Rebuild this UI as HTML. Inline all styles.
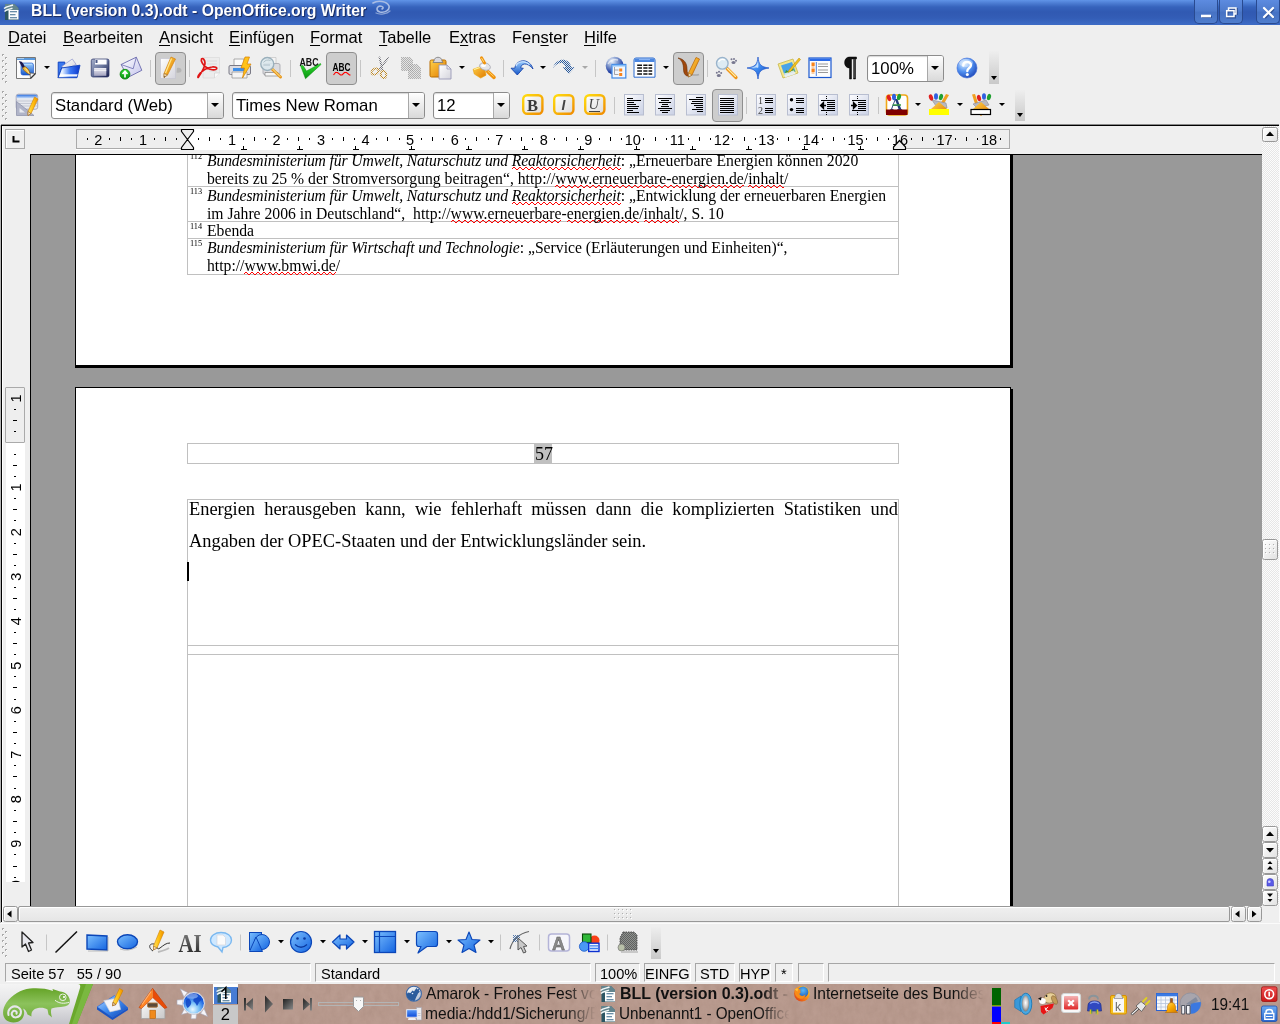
<!DOCTYPE html>
<html><head><meta charset="utf-8">
<style>
*{box-sizing:border-box;margin:0;padding:0}
html,body{width:1280px;height:1024px;overflow:hidden;background:#efefef;font-family:"Liberation Sans",sans-serif;color:#000}
.a{position:absolute}
svg{position:absolute;overflow:visible}
#title{left:0;top:0;width:1280px;height:25px;background:linear-gradient(#6094e8 0,#4d7ed4 3px,#3663bc 7px,#3059b2 12px,#335db6 18px,#3c6ac4 24px)}
#title .t{left:31px;top:1px;font-weight:bold;font-size:17px;color:#fff;text-shadow:1px 1px 1px #16275a;white-space:nowrap;transform:scaleX(.928);transform-origin:0 0}
.wb{top:0;height:24px;width:24px;border:1px solid #294a90;border-top:none;border-radius:0 0 5px 5px;background:linear-gradient(#5d8be0,#4f7ccd 45%,#4672c4 55%,#4f7dcd)}
#menu{left:0;top:25px;width:1280px;height:25px;background:#efefef}
#menu span{position:absolute;top:3px;font-size:16.5px;white-space:nowrap}
#menu u{text-decoration:underline;text-underline-offset:1.500px}
.combo{background:#fff;border:1px solid #8c8c8c;border-radius:3px;height:27px;font-size:17px;line-height:25px;padding-left:3px;white-space:nowrap;overflow:hidden;box-shadow:inset 0 1px 1px #d8d8d8}
.combo i{position:absolute;right:0;top:0;bottom:0;width:16px;border-left:1px solid #a8a8a8;background:linear-gradient(#fefefe,#d9d9d9)}
.combo i:after{content:"";position:absolute;left:3px;top:10px;border:4px solid transparent;border-top:4px solid #000;border-bottom:none}
.cx{display:inline-block;font-weight:normal;transform:scaleX(.985);transform-origin:0 50%}
.pressed{background:#cdcdcd;border:1px solid #8f8f8f;border-radius:4px}
.sep{width:1px;background:#c6c6c6}
.dd{width:0;height:0;border:3px solid transparent;border-top:3.300px solid #000;border-bottom:none}
.grip{width:5px;background:repeating-linear-gradient(#aaa 0 1px,transparent 1px 6px) 0px 0px/2px 100% no-repeat,repeating-linear-gradient(#aaa 0 1px,transparent 1px 6px) 0px 1px/1px 100% no-repeat,repeating-linear-gradient(#fff 0 1px,transparent 1px 6px) 1px 1px/1px 100% no-repeat,repeating-linear-gradient(#aaa 0 1px,transparent 1px 6px) 3px 3px/2px 100% no-repeat,repeating-linear-gradient(#aaa 0 1px,transparent 1px 6px) 3px 4px/1px 100% no-repeat,repeating-linear-gradient(#fff 0 1px,transparent 1px 6px) 4px 4px/1px 100% no-repeat}
.ovf{width:10px;background:linear-gradient(#eee,#c9c9c9)}
.ovf2:after{bottom:6px !important}
.ovf:after{content:"";position:absolute;left:2px;bottom:4px;border:3px solid transparent;border-top:4px solid #000;border-bottom:none}
#doc{left:30px;top:154px;width:1232px;height:752px;background:#999;overflow:hidden;border-left:1px solid #000;border-top:1px solid #000}
.ser{font-family:"Liberation Serif",serif}
.fr{border:1px solid #c0c0c0}
.ln{white-space:nowrap;font-family:"Liberation Serif",serif;transform-origin:0 0}
.fn{font-size:15.7px;line-height:18px}
.bd{font-size:18.4px;line-height:22px}
.sp{padding-bottom:1px;background:repeating-linear-gradient(90deg,transparent 0 1px,#f00 1px 3px,transparent 3px 6px) 0 calc(100% - 2px)/100% 1px no-repeat,repeating-linear-gradient(90deg,#f00 0 1px,transparent 1px 3px,#f00 3px 4px,transparent 4px 6px) 0 calc(100% - 1px)/100% 1px no-repeat,repeating-linear-gradient(90deg,transparent 0 4px,#f00 4px 6px) 0 100%/100% 1px no-repeat}
.sf{border:1px solid;border-color:#a6a6a6 #fff #fff #a6a6a6;height:19px;top:963px;font-size:14.600px;line-height:21px;white-space:nowrap;overflow:hidden}
.sbtn{border:1px solid #989898;border-radius:2.500px;background:linear-gradient(135deg,#fff,#e2e2e2);box-shadow:inset 1px 1px 0 #fff}
.tk{font-size:16.5px;white-space:nowrap;color:#111;overflow:hidden;-webkit-mask-image:linear-gradient(90deg,#000 82%,transparent 99%);mask-image:linear-gradient(90deg,#000 82%,transparent 99%)}
.nx{display:inline-block;transform:scaleX(.945);transform-origin:0 50%}
</style></head><body><div id="root" class="a" style="left:0;top:0;width:1280px;height:1024px;will-change:transform;overflow:hidden">
<!-- TITLE BAR -->
<div id="title" class="a">
 <svg style="left:3px;top:3px" width="17" height="18" viewBox="0 0 17 18">
  <path d="M2 1H11.500L15.500 5V17H2Z" fill="#2c5664"/>
  <path d="M2 1H11.500L15.500 5V8H2Z" fill="#7a9aa0" opacity=".7"/>
  <path d="M1 5.500C4 3 7 3.500 10 2M1.500 8.500C4 6 7 6.500 9.500 5" stroke="#f4f8f8" stroke-width="1.400" fill="none"/>
  <path d="M5.500 7H15.500V16.500H5.500Z" fill="#fdfefe"/>
  <path d="M7 8.800H14M7 11.800H12.500M7 14.800H14" stroke="#3a6a8c" stroke-width="1.100"/>
 </svg>
 <div class="a t">BLL (version 0.3).odt - OpenOffice.org Writer</div>
 <svg style="left:370px;top:0px" width="22" height="16" viewBox="0 0 22 16">
  <path d="M3 3 C8 0 17 1 19 6 C20 10 15 13 10 12 C6 11 6 7 10 6 C13 6 14 8 12 9" fill="none" stroke="#a9bde4" stroke-width="1.6" stroke-linecap="round"/>
  <path d="M6 13 C10 15 17 14 20 11" fill="none" stroke="#8aa3d6" stroke-width="1.2" stroke-linecap="round"/>
 </svg>
 <div class="a wb" style="left:1194px"></div>
 <div class="a wb" style="left:1219px"></div>
 <div class="a wb" style="left:1256px"></div>
 <svg style="left:1194px;top:0" width="86" height="24" viewBox="0 0 86 24">
  <g fill="none" stroke="#1c3470" stroke-width="2" opacity=".55" transform="translate(1,1)">
   <path d="M7 16H17"/><path d="M34.500 8h7.500v6M32.500 10.500h7.500v6h-7.500z"/><path d="M70 8l9 9M79 8l-9 9"/>
  </g>
  <path d="M7 16H17" stroke="#fff" stroke-width="2.6"/>
  <path d="M34.500 10V8h7.500v6h-2" fill="none" stroke="#fff" stroke-width="1.4"/>
  <rect x="32.700" y="10.700" width="7.300" height="5.800" fill="none" stroke="#fff" stroke-width="1.5"/>
  <path d="M70 8l9 9M79 8l-9 9" stroke="#fff" stroke-width="2.2" stroke-linecap="round"/>
 </svg>
</div>
<!-- MENU -->
<div id="menu" class="a">
 <span style="left:8px"><u>D</u>atei</span>
 <span style="left:63px"><u>B</u>earbeiten</span>
 <span style="left:159px"><u>A</u>nsicht</span>
 <span style="left:229px"><u>E</u>infügen</span>
 <span style="left:310px"><u>F</u>ormat</span>
 <span style="left:379px"><u>T</u>abelle</span>
 <span style="left:449px">E<u>x</u>tras</span>
 <span style="left:512px">Fen<u>s</u>ter</span>
 <span style="left:584px"><u>H</u>ilfe</span>
</div>
<!-- TOOLBAR 1 -->
<svg width="0" height="0"><defs>
 <linearGradient id="gBlue" x1="0" y1="0" x2="0" y2="1"><stop offset="0" stop-color="#9fd0ff"/><stop offset="1" stop-color="#1556c8"/></linearGradient>
 <linearGradient id="gBlue2" x1="0" y1="0" x2="1" y2="1"><stop offset="0" stop-color="#bfe0ff"/><stop offset=".5" stop-color="#3d8af0"/><stop offset="1" stop-color="#0b3fae"/></linearGradient>
 <linearGradient id="gPaper" x1="0" y1="0" x2="1" y2="1"><stop offset="0" stop-color="#fff"/><stop offset="1" stop-color="#d4d4dc"/></linearGradient>
 <linearGradient id="gOr" x1="0" y1="0" x2="1" y2="1"><stop offset="0" stop-color="#ffd24a"/><stop offset="1" stop-color="#e07a00"/></linearGradient>
 <linearGradient id="gGrn" x1="0" y1="0" x2="0" y2="1"><stop offset="0" stop-color="#30e030"/><stop offset="1" stop-color="#089010"/></linearGradient>
 <radialGradient id="gGlobe" cx=".35" cy=".3" r=".8"><stop offset="0" stop-color="#d8ecff"/><stop offset=".5" stop-color="#4f8ff0"/><stop offset="1" stop-color="#1a3fb0"/></radialGradient>
 <linearGradient id="gAl" x1="0" y1="0" x2="1" y2="1"><stop offset="0" stop-color="#fdfdff"/><stop offset="1" stop-color="#c9d0e4"/></linearGradient>
 <pattern id="dith" width="2" height="2" patternUnits="userSpaceOnUse"><rect width="1" height="1" fill="#555"/><rect x="1" y="1" width="1" height="1" fill="#555"/></pattern>
 <pattern id="dithBg" width="2" height="2" patternUnits="userSpaceOnUse"><rect width="1" height="1" fill="#efefef"/><rect x="1" y="1" width="1" height="1" fill="#efefef"/></pattern>
 <pattern id="dithB" width="2" height="2" patternUnits="userSpaceOnUse"><rect width="1" height="1" fill="#2a5a9a"/><rect x="1" y="1" width="1" height="1" fill="#2a5a9a"/></pattern>
</defs></svg>
<div class="a grip" style="left:2px;top:54px;height:29px"></div>
<!-- new doc -->
<svg style="left:15px;top:56px" width="23" height="24" viewBox="0 0 23 24">
 <path d="M1.500 1.500H20.500V17.500L15.500 22.500H1.500Z" fill="#fcfcfc" stroke="#777" stroke-width="1"/>
 <path d="M2 2H20V4H2Z" fill="#5a9ade"/><path d="M2 2H9V3H2Z" fill="#a8ccf0"/>
 <rect x="6" y="7" width="12.500" height="12" rx="2" fill="url(#gBlue)" stroke="#1a50c8" stroke-width=".6"/>
 <path d="M7.500 8.500H17" stroke="#b8dcff" stroke-width="1.200" opacity=".8"/>
 <path d="M20.500 17.500L15 17 L15.500 22.500Z" fill="#f4f4f4" stroke="#555" stroke-width=".7" stroke-linejoin="round"/>
 <path d="M15.500 22.500L20.500 17.500" stroke="#333" stroke-width="1.200"/>
 <path d="M4 5.500 C5 5 7 5.500 8.500 8 L10 11 L7.500 12 Z" fill="#1c1850"/>
 <path d="M7.500 12 L10 10.500 C13 12 15 15 15 18.500 C12 17.500 9 15 7.500 12Z" fill="#f0b838" stroke="#7a4a10" stroke-width=".6"/>
 <path d="M10.500 12.500 C12 14 13.500 16 14.300 17.800" stroke="#fff0b0" stroke-width=".8" fill="none"/>
</svg>
<div class="a dd" style="left:44px;top:66px"></div>
<!-- open -->
<svg style="left:57px;top:58px" width="24" height="21" viewBox="0 0 24 21">
 <defs><linearGradient id="gFold" x1="0" y1="0" x2="1" y2="0"><stop offset="0" stop-color="#f4f8ff"/><stop offset=".2" stop-color="#e0ecff"/><stop offset=".55" stop-color="#3a78f4"/><stop offset="1" stop-color="#0a34cc"/></linearGradient></defs>
 <path d="M1.200 4.100H7.800V6L4.700 10L1.200 19.700Z" fill="#3a78ee" stroke="#0c3fbe" stroke-width=".9"/>
 <path d="M4.700 8.400L15.300 1L19.200 6.500L9 11Z" fill="url(#gPaper)" stroke="#8088c8" stroke-width=".6"/>
 <path d="M4.700 10L23 7.200L20 19.700H1.200Z" fill="url(#gFold)" stroke="#0c3fbe" stroke-width=".9" stroke-linejoin="round"/>
 <path d="M3 16.200H20.600L20 18.500H2.400Z" fill="#fff" opacity=".92"/>
</svg>
<!-- save -->
<svg style="left:90px;top:58px" width="20" height="20" viewBox="0 0 20 20">
 <defs><linearGradient id="gFl" x1="0" y1="0" x2="1" y2="1"><stop offset="0" stop-color="#a4aeca"/><stop offset=".5" stop-color="#6a769e"/><stop offset="1" stop-color="#161c4c"/></linearGradient>
 <linearGradient id="gFl2" x1="0" y1="0" x2="0" y2="1"><stop offset="0" stop-color="#ececf4"/><stop offset="1" stop-color="#a4a4c0"/></linearGradient></defs>
 <rect x="1.250" y="1" width="17.750" height="18" rx="1.800" fill="url(#gFl)" stroke="#2a3266" stroke-width=".7"/>
 <rect x="5" y="1.500" width="11.600" height="5" fill="#fdfdff"/><rect x="5.500" y="2" width="2" height="3" fill="#4a5888"/>
 <rect x="4.100" y="10" width="12.200" height="7.800" fill="url(#gFl2)"/>
 <path d="M4.100 12.500H16.300" stroke="#fff" stroke-width=".8" opacity=".8"/>
</svg>
<!-- mail -->
<svg style="left:119px;top:56px" width="24" height="24" viewBox="0 0 24 24">
 <defs><linearGradient id="gEnv" x1="0" y1="0" x2="1" y2="1"><stop offset="0" stop-color="#fff"/><stop offset="1" stop-color="#c4c4ec"/></linearGradient></defs>
 <path d="M2.100 8.500L17.300 1.200L22.800 14.300L9.100 21.300Z" fill="url(#gEnv)" stroke="#5a5aa4" stroke-width=".8" stroke-linejoin="round"/>
 <path d="M2.100 8.500L14.200 12.750L17.300 1.200" fill="none" stroke="#6a6ab0" stroke-width=".8"/>
 <circle cx="6" cy="18.200" r="4.900" fill="url(#gGrn)" stroke="#0a7a0c" stroke-width=".8"/>
 <path d="M6 21.500V16M3.500 18L6 15.300L8.500 18" fill="none" stroke="#fff" stroke-width="1.700"/>
</svg>
<div class="a sep" style="left:150px;top:60px;height:17px"></div>
<!-- edit doc pressed -->
<div class="a pressed" style="left:155px;top:52px;width:31px;height:33px"></div>
<svg style="left:159px;top:56px" width="24" height="24" viewBox="0 0 24 24">
 <path d="M18 12 C20.500 11 22.500 12.500 22.500 14.500 C22.500 16.500 20 17 17.500 16.500Z" fill="#b4b4b4"/>
 <path d="M1.500 2.500H16.500V22.500H1.500Z" fill="url(#gPaper)" stroke="#c4c4d0" stroke-width=".7"/>
 <path d="M12 1 L16.500 3 L8.500 19 L5 21.500 L5 17.500Z" fill="url(#gOr)" stroke="#d07800" stroke-width=".6"/>
 <path d="M12.500 2.500L6.500 17" stroke="#ffe890" stroke-width="1.200"/>
 <path d="M5 17.500 L8.500 19 L5 21.500Z" fill="#f0d8b0" stroke="#8a5a20" stroke-width=".5"/>
 <path d="M5 20.300 L6 20.800 L5 21.500Z" fill="#222"/>
</svg>
<div class="a sep" style="left:189px;top:60px;height:17px"></div>
<!-- pdf -->
<svg style="left:196px;top:56px" width="25" height="24" viewBox="0 0 25 24">
 <path d="M7 1.500H23.500V17L18.500 22H7Z" fill="#ececec" stroke="#dcdcdc" stroke-width=".8"/>
 <path d="M23.500 17H18.500V22" fill="#fafafa" stroke="#d0d0d0" stroke-width=".7"/>
 <path d="M11 5H21M11 8H21M13 15H21" stroke="#dadada" stroke-width="1"/>
 <path d="M2.500 21 C5 17 9 12 9 7 C9 3.500 6.500 1.500 5.500 3 C4.500 5 7 9 10.500 11.500 C14 14 19 14.500 20.500 13 C21.500 11.500 19 10.500 16 11 C11 11.500 5 15 2.500 19.500 C1.500 21.500 2 22 2.500 21Z" fill="none" stroke="#e01414" stroke-width="1.700" stroke-linejoin="round"/>
</svg>
<!-- print direct -->
<svg style="left:228px;top:56px" width="24" height="24" viewBox="0 0 24 24">
 <path d="M6 3H16V10H6Z" fill="#fbfbfb" stroke="#9a9a9a" stroke-width=".8"/>
 <path d="M2 9.500 H21 Q22.500 9.500 22.500 11 V17 Q22.500 18.500 21 18.500 H2.500 Q1 18.500 1 17 V11 Q1 9.500 2 9.500Z" fill="#dcdce2" stroke="#7a7a86" stroke-width="1"/>
 <path d="M5 12H17V15H5Z" fill="#3f8fe8"/>
 <path d="M4 16H19V22H4Z" fill="#f4f4f4" stroke="#9a9a9a" stroke-width=".8"/>
 <path d="M17 1 L21.500 1 L19 8 L23 8 L14.500 22 L16.500 12 L13 12Z" fill="#ffc21a" stroke="#d68000" stroke-width=".7"/>
</svg>
<!-- preview -->
<svg style="left:259px;top:56px" width="24" height="24" viewBox="0 0 24 24">
 <path d="M10 1.500H17V8H10Z" fill="#f4f4f4" stroke="#bbb" stroke-width=".6"/>
 <path d="M4 9 Q4 7.500 6 7.500 H19 Q21 7.500 21 9 V17 Q21 18.500 19 18.500 H6 Q4 18.500 4 17Z" fill="#dcdce0" stroke="#a4a4ac" stroke-width=".8"/>
 <path d="M6 16.500H19V20H6Z" fill="#f6f6f6" stroke="#555" stroke-width=".5"/>
 <path d="M13 13 L21.500 21" stroke="#e8961a" stroke-width="3" stroke-linecap="round"/>
 <path d="M13.500 13 L21 20.500" stroke="#fff0a0" stroke-width="1" stroke-linecap="round"/>
 <circle cx="8.300" cy="8" r="6.500" fill="#dce8ee" fill-opacity=".88" stroke="#9ab0bc" stroke-width="1.400"/>
 <path d="M4.500 6.500 C6 4 9 3.500 11.500 4.500M4.500 9H11" fill="none" stroke="#8aa0a8" stroke-width=".8" opacity=".7"/>
</svg>
<div class="a sep" style="left:290px;top:60px;height:17px"></div>
<!-- spellcheck -->
<svg style="left:298px;top:56px" width="24" height="24" viewBox="0 0 24 24">
 <text x="1.500" y="9.500" font-family="Liberation Sans" font-size="10" font-weight="bold" textLength="19" lengthAdjust="spacingAndGlyphs" fill="#111">ABC</text>
 <path d="M2.600 9.800 L5 9.500 L8.500 15 L22.500 7.500 L23 8.500 L7.500 22.700Z" fill="url(#gGrn)" stroke="#0b8a0e" stroke-width=".5"/>
</svg>
<!-- autospell pressed -->
<div class="a pressed" style="left:326px;top:52px;width:31px;height:33px"></div>
<svg style="left:331px;top:57px" width="22" height="22" viewBox="0 0 22 22">
 <text x="1.500" y="14" font-family="Liberation Sans" font-size="10.500" font-weight="bold" textLength="18" lengthAdjust="spacingAndGlyphs" fill="#000">ABC</text>
 <path d="M2.500 18 l2-2.500 h2 l3 2.500 h1.500 l2.500-2.500 h2 l3 2.500 h1" fill="none" stroke="#ff0000" stroke-width="1.200"/>
</svg>
<div class="a sep" style="left:360px;top:60px;height:17px"></div>
<!-- cut -->
<svg style="left:370px;top:56px" width="20" height="24" viewBox="0 0 20 24">
 <path d="M18 2 L9 14 M9.500 1.500 L12.500 14" stroke="#707078" stroke-width="1.800" stroke-linecap="round"/>
 <ellipse cx="5" cy="15.500" rx="3.800" ry="2.700" transform="rotate(-35 5 15.500)" fill="none" stroke="#c08820" stroke-width="2"/>
 <ellipse cx="13.500" cy="18.500" rx="2.700" ry="3.600" transform="rotate(-10 13.500 18.500)" fill="none" stroke="#c08820" stroke-width="2"/>
 <rect x="0" y="0" width="20" height="24" fill="url(#dithBg)"/>
</svg>
<!-- copy (disabled) -->
<svg style="left:400px;top:56px" width="22" height="24" viewBox="0 0 22 24">
 <path d="M1 1H10L13 4V15H1Z" fill="url(#dith)" opacity=".75"/>
 <path d="M8 8H17L21 12V23H8Z" fill="url(#dith)" opacity=".75"/>
 <path d="M1 1H10L13 4V15H1Z M8 8H17L21 12V23H8Z" fill="#d9d9d9" opacity=".55"/>
</svg>
<!-- paste -->
<svg style="left:429px;top:56px" width="23" height="24" viewBox="0 0 23 24">
 <rect x="1" y="4" width="16" height="17" rx="1.500" fill="url(#gOr)" stroke="#b86c00" stroke-width="1"/>
 <path d="M5 5 C5 0 13 0 13 5 L14 6.500 H4Z" fill="#d8d8de" stroke="#777" stroke-width=".8"/>
 <path d="M10 9H18L22 13V23H10Z" fill="url(#gPaper)" stroke="#9a9ab8" stroke-width=".9"/>
 <path d="M18 9V13H22" fill="none" stroke="#9a9ab8" stroke-width=".8"/>
</svg>
<div class="a dd" style="left:459px;top:66px"></div>
<!-- format paintbrush -->
<svg style="left:472px;top:56px" width="24" height="24" viewBox="0 0 24 24">
 <path d="M15.800 15.700L22 21.300" stroke="#f09410" stroke-width="3.600" stroke-linecap="round"/>
 <path d="M16 15.300L21.500 20.300" stroke="#ffd060" stroke-width="1" stroke-linecap="round"/>
 <path d="M1.100 13.300L12.300 9.200L14 19.200L8.700 22.100L2.300 18Z" fill="url(#gOr)" stroke="#e8a000" stroke-width=".6"/>
 <path d="M2 13.500L11 10.500" stroke="#fff4a0" stroke-width="1.200"/>
 <ellipse cx="13" cy="10.500" rx="5.500" ry="3.600" transform="rotate(15 13 10.500)" fill="#e4e4e8" stroke="#a4a4ac" stroke-width=".7"/>
 <ellipse cx="11.500" cy="9.500" rx="2.500" ry="1.500" fill="#fff"/>
 <path d="M9.500 1.800L12.500 7" stroke="#f09410" stroke-width="3" stroke-linecap="round"/>
 <path d="M9.800 2.500L11.500 5.500" stroke="#ffe080" stroke-width="1" stroke-linecap="round"/>
</svg>
<div class="a sep" style="left:503px;top:60px;height:17px"></div>
<!-- undo -->
<svg style="left:510px;top:58px" width="24" height="20" viewBox="0 0 24 20">
 <path d="M1 10.200 H4.800 C5.500 5 10 2.500 14 2.800 C18.500 3.200 22 7 23 11 C20.500 7.500 17 5.800 14.500 6 C12 6.300 10.800 8 10.800 10.200 H13.300 L7.300 17Z" fill="url(#gBlue)" stroke="#0d3aa6" stroke-width=".8" stroke-linejoin="round"/>
 <path d="M6 8 C7 5 10.500 3.600 14 3.800 C16 4 18 5 19.500 6.500" fill="none" stroke="#cfe6ff" stroke-width="1.200"/>
</svg>
<div class="a dd" style="left:540px;top:66px"></div>
<!-- redo (disabled) -->
<svg style="left:552px;top:57px" width="24" height="20" viewBox="0 0 24 20">
 <g transform="translate(24,0) scale(-1,1)"><path d="M1 10.200 H4.800 C5.500 5 10 2.500 14 2.800 C18.500 3.200 22 7 23 11 C20.500 7.500 17 5.800 14.500 6 C12 6.300 10.800 8 10.800 10.200 H13.300 L7.300 17Z" fill="#e4e8f0"/>
 <path d="M1 10.200 H4.800 C5.500 5 10 2.500 14 2.800 C18.500 3.200 22 7 23 11 C20.500 7.500 17 5.800 14.500 6 C12 6.300 10.800 8 10.800 10.200 H13.300 L7.300 17Z" fill="url(#dithB)"/></g>
</svg>
<div class="a dd" style="left:582px;top:66px;border-top-color:#a8a8a8"></div>
<div class="a sep" style="left:595px;top:60px;height:17px"></div>
<!-- hyperlink -->
<svg style="left:604px;top:56px" width="24" height="24" viewBox="0 0 24 24">
 <defs><radialGradient id="gGlobe2" cx=".35" cy=".25" r=".85"><stop offset="0" stop-color="#f0f4fc"/><stop offset=".35" stop-color="#8aa0d0"/><stop offset=".7" stop-color="#2a48a8"/><stop offset="1" stop-color="#16246a"/></radialGradient></defs>
 <circle cx="10.700" cy="9.800" r="9" fill="url(#gGlobe2)"/>
 <path d="M4 8 C6 4.500 10 3 14 4" fill="none" stroke="#fff" stroke-width="1.300" opacity=".6"/>
 <rect x="8" y="8.500" width="13.800" height="13.500" fill="#f2f6fc" stroke="#4a90e8" stroke-width="1.300"/>
 <path d="M8.500 9H21.500V10.500H8.500Z" fill="#8ac0f8"/>
 <rect x="15.200" y="12.500" width="3" height="3" fill="#f8841c"/><rect x="15.200" y="17" width="3" height="3" fill="#f8841c"/>
 <path d="M10.500 11V18.500H14.500M10.500 14H14.500" fill="none" stroke="#9a9aa0" stroke-width=".9"/>
</svg>
<!-- table -->
<svg style="left:633px;top:57px" width="23" height="22" viewBox="0 0 23 22">
 <path d="M1 3 Q1 1 3 1 H20 Q22 1 22 3 V20.200 H1Z" fill="#fff" stroke="#2a6ad0" stroke-width="1"/>
 <path d="M1.500 3 Q1.500 1.500 3 1.500 H20 Q21.500 1.500 21.500 3 V5 H1.500Z" fill="#4a86e0"/>
 <path d="M6 2.500H17" stroke="#8ab4f4" stroke-width="1.200"/>
 <path d="M4.200 8.200h4.800M10.300 8.200h4.200M15.500 8.200h3.700M4.200 11h4.800M10.300 11h4.200M15.500 11h3.700M4.200 14h4.800M10.300 14h4.200M15.500 14h3.700M4.200 17h4.800M10.300 17h4.200M15.500 17h3.700" stroke="#111" stroke-width="1.500"/>
</svg>
<div class="a dd" style="left:663px;top:66px"></div>
<!-- draw functions pressed -->
<div class="a pressed" style="left:673px;top:52px;width:31px;height:33px"></div>
<svg style="left:677px;top:56px" width="24" height="24" viewBox="0 0 24 24">
 <path d="M12 19 C16 19 20 19.500 22 18.500" stroke="#a8a8a8" stroke-width="1.500" fill="none"/>
 <path d="M1 2 C7 3 10 7 10 13 C10 17 11 19 13 20 C9 21 6.500 18 6.500 13 C6.500 8 5 4 1 2Z" fill="#a0480c" stroke="#6a2c04" stroke-width=".6"/>
 <path d="M19 1.500 L22.500 3 L15 19 L11.500 21 L11.500 17Z" fill="url(#gOr)" stroke="#b86000" stroke-width=".7"/>
 <path d="M11.500 17 L15 19 L11.500 21Z" fill="#f0d8b0" stroke="#8a5a20" stroke-width=".5"/>
</svg>
<div class="a sep" style="left:707px;top:60px;height:17px"></div>
<!-- find -->
<svg style="left:714px;top:56px" width="25" height="24" viewBox="0 0 25 24">
 <path d="M13 12.500 L22 21.500" stroke="#f0961a" stroke-width="3.200" stroke-linecap="round"/>
 <path d="M13.500 12.500 L21.500 20.500" stroke="#fff0a8" stroke-width="1.100" stroke-linecap="round"/>
 <circle cx="8.300" cy="7.300" r="5.800" fill="#dbeaf4" fill-opacity=".92" stroke="#9ab4cc" stroke-width="1.400"/>
 <path d="M4.500 6 C5.500 3.500 8.500 2.800 11 4" fill="none" stroke="#fff" stroke-width="1.200"/>
 <g fill="#787890"><circle cx="17.500" cy="3.300" r="1"/><circle cx="20" cy="3" r="1"/><circle cx="22" cy="4.800" r="1"/><ellipse cx="19.500" cy="6.500" rx="2" ry="1.500"/>
 <circle cx="2.800" cy="16.800" r="1"/><circle cx="5" cy="15.800" r="1"/><circle cx="7.200" cy="17" r="1"/><ellipse cx="4.800" cy="19.500" rx="2" ry="1.500"/></g>
</svg>
<!-- navigator -->
<svg style="left:746px;top:56px" width="24" height="24" viewBox="0 0 24 24">
 <path d="M12 1 C12.800 8.500 14.500 10.800 23 12 C14.500 13.200 12.800 15.500 12 23 C11.200 15.500 9.500 13.200 1 12 C9.500 10.800 11.200 8.500 12 1Z" fill="url(#gBlue2)" stroke="#1a50c8" stroke-width=".7"/>
 <path d="M12 4.500 C12.300 9 12.800 10.800 12 12 C10.500 11.200 8.500 11.500 5 12 C9.500 10.800 11.300 9.500 12 4.500Z" fill="#d8ecff" opacity=".85"/>
</svg>
<!-- gallery -->
<svg style="left:777px;top:56px" width="24" height="24" viewBox="0 0 24 24">
 <path d="M1 8 L16 3 L21 17 L6 22Z" fill="#f4e68a" stroke="#c8b84a" stroke-width=".8"/>
 <path d="M4 9.500 L15 6 L18.500 15.500 L7.500 19Z" fill="#4aa4e8"/>
 <path d="M7.500 19 L9 14 L12 16 L15 12 L18.500 15.500Z" fill="#3c9a30"/>
 <path d="M7 17.500 L17 14.200 L18.500 18 L8 21.500Z" fill="#e8f0fa" opacity=".9"/>
 <path d="M22 2 L12 14 L11 16.500 L13.500 15.500 L23.500 3.500Z" fill="#f0c020" stroke="#b88a00" stroke-width=".5"/>
</svg>
<!-- data sources -->
<svg style="left:808px;top:57px" width="24" height="22" viewBox="0 0 24 22">
 <rect x="1" y="1" width="22" height="19.500" fill="#fdfdfd" stroke="#1a58d0" stroke-width="1.200"/>
 <path d="M1.500 1.500H22.500V4H1.500Z" fill="#2a6ae8"/>
 <rect x="3.500" y="5.500" width="3.200" height="3.500" fill="#f8841c"/><rect x="3.500" y="11.500" width="3.200" height="3.500" fill="#f8841c"/>
 <path d="M3.500 10h3M3.500 16h3" stroke="#f8a050" stroke-width="1"/>
 <path d="M8.300 5V19" stroke="#4a80e0" stroke-width="1"/>
 <path d="M10 7H20M10 9.500H20M10 13H20M10 15.500H20" stroke="#9a9a9a" stroke-width="1"/>
</svg>
<!-- pilcrow -->
<svg style="left:843px;top:56px" width="14" height="24" viewBox="0 0 14 24">
 <path d="M13.500 1 H6.500 C0 1 0 12 6.500 12 V23 H8.500 V3 H10.500 V23 H12.500 V3 H13.500Z" fill="#111" stroke="#000" stroke-width=".5"/>
 <path d="M11 3V22" stroke="#888" stroke-width=".8"/>
</svg>
<!-- zoom combo -->
<div class="a combo" style="left:867px;top:55px;width:77px;"><b class="cx">100%</b><i></i></div>
<!-- help -->
<svg style="left:956px;top:57px" width="22" height="22" viewBox="0 0 22 22">
 <circle cx="11" cy="11" r="10" fill="url(#gGlobe)" stroke="#3a6ad8" stroke-width=".6"/>
 <ellipse cx="10" cy="6" rx="7" ry="4" fill="#fff" opacity=".35"/>
 <path d="M7.300 8.500 C7.300 3.800 15 3.800 15 8.300 C15 11 11.300 11 11.300 14" fill="none" stroke="#fff" stroke-width="2.400" stroke-linecap="round"/>
 <circle cx="11.300" cy="17.500" r="1.500" fill="#fff"/>
</svg>
<div class="a ovf" style="left:989px;top:51px;height:33px"></div>
<!-- TOOLBAR 2 -->
<div class="a grip" style="left:2px;top:91px;height:29px"></div>
<!-- styles -->
<svg style="left:15px;top:93px" width="24" height="24" viewBox="0 0 24 24">
 <defs><linearGradient id="gYl" x1="0" y1="0" x2="1" y2="0"><stop offset="0" stop-color="#ffe060"/><stop offset=".5" stop-color="#ffc010"/><stop offset="1" stop-color="#f09000"/></linearGradient>
 <linearGradient id="gStT" x1="0" y1="0" x2="0" y2="1"><stop offset="0" stop-color="#2a70e0"/><stop offset="1" stop-color="#d8e8fc"/></linearGradient></defs>
 <rect x="1.200" y="1.200" width="21.500" height="15" rx="2" fill="#e6e8ee" stroke="#9498b0" stroke-width=".8"/>
 <path d="M1.700 3.200 Q1.700 1.700 3.200 1.700 H20.700 Q22.200 1.700 22.200 3.200 V5.500 H1.700Z" fill="url(#gStT)"/>
 <path d="M2 8H22M2 10.500H22M2 13H22" stroke="#c4c8d4" stroke-width="1.200"/>
 <path d="M1.500 8.500V22.500H19Z" fill="#b0b4c8" stroke="#8a8ea8" stroke-width=".7"/>
 <path d="M4.500 15V19.500H10Z" fill="#e8eaf0"/>
 <path d="M19.500 4 L23 6 L16 20.500 L13 22.500 L13 18.500Z" fill="url(#gYl)" stroke="#d08000" stroke-width=".6"/>
 <path d="M13 18.500 L16 20.500 L13 22.500Z" fill="#f4e0c0" stroke="#8a5a20" stroke-width=".5"/>
</svg>
<div class="a combo" style="left:51px;top:92px;width:173px"><b class="cx">Standard (Web)</b><i></i></div>
<div class="a combo" style="left:232px;top:92px;width:193px"><b class="cx">Times New Roman</b><i></i></div>
<div class="a combo" style="left:433px;top:92px;width:77px"><b class="cx">12</b><i></i></div>
<!-- B I U -->
<svg style="left:522px;top:94px" width="84" height="22" viewBox="0 0 84 22">
 <defs><linearGradient id="gBtn" x1="0" y1="0" x2="1" y2="1"><stop offset="0" stop-color="#fff"/><stop offset="1" stop-color="#dcdcdc"/></linearGradient>
 <linearGradient id="gBtnB" x1="0" y1="0" x2="1" y2="1"><stop offset="0" stop-color="#ffdc10"/><stop offset="1" stop-color="#f08c00"/></linearGradient></defs>
 <g id="biu"><rect x="1.200" y="1.200" width="19.200" height="18.600" rx="4" fill="url(#gBtn)" stroke="url(#gBtnB)" stroke-width="2.400"/></g>
 <g transform="translate(31,0)"><rect x="1.200" y="1.200" width="19.200" height="18.600" rx="4" fill="url(#gBtn)" stroke="url(#gBtnB)" stroke-width="2.400"/></g><g transform="translate(62,0)"><rect x="1.200" y="1.200" width="19.200" height="18.600" rx="4" fill="url(#gBtn)" stroke="url(#gBtnB)" stroke-width="2.400"/></g>
 <text x="5" y="16.500" font-family="Liberation Serif" font-weight="bold" font-size="16.500" fill="#3a3a3a">B</text>
 <text x="39.500" y="16" font-family="Liberation Sans" font-style="italic" font-weight="bold" font-size="14" fill="#444">I</text>
 <text x="66.500" y="15" font-family="Liberation Serif" font-style="italic" font-size="14.500" fill="#444">U</text>
 <path d="M67 17.500H78" stroke="#444" stroke-width="1"/>
</svg>
<div class="a sep" style="left:614px;top:97px;height:17px"></div>
<!-- alignment -->
<div class="a pressed" style="left:712px;top:89px;width:31px;height:33px"></div>
<svg style="left:624px;top:94px" width="246" height="22" viewBox="0 0 246 22">
 <g id="alb"><rect x=".5" y=".5" width="19" height="20.500" fill="url(#gAl)" stroke="#b8bed0" stroke-width="1"/></g>
 <g transform="translate(31,0)"><rect x=".5" y=".5" width="19" height="20.500" fill="url(#gAl)" stroke="#b8bed0" stroke-width="1"/></g><g transform="translate(62,0)"><rect x=".5" y=".5" width="19" height="20.500" fill="url(#gAl)" stroke="#b8bed0" stroke-width="1"/></g><g transform="translate(94,0)"><rect x=".5" y=".5" width="19" height="20.500" fill="url(#gAl)" stroke="#b8bed0" stroke-width="1"/></g>
 <g transform="translate(132,0)"><rect x=".5" y=".5" width="19" height="20.500" fill="url(#gAl)" stroke="#b8bed0" stroke-width="1"/></g><g transform="translate(163,0)"><rect x=".5" y=".5" width="19" height="20.500" fill="url(#gAl)" stroke="#b8bed0" stroke-width="1"/></g><g transform="translate(194,0)"><rect x=".5" y=".5" width="19" height="20.500" fill="url(#gAl)" stroke="#b8bed0" stroke-width="1"/></g><g transform="translate(225,0)"><rect x=".5" y=".5" width="19" height="20.500" fill="url(#gAl)" stroke="#b8bed0" stroke-width="1"/></g>
 <g stroke="#000" stroke-width="1" shape-rendering="crispEdges">
  <path d="M3 4.5h6M3 6.5h14M3 8.5h7M3 10.5h9M3 12.5h12M3 14.5h11M3 16.5h6M3 18.5h12"/>
  <path d="M34 4.5h14M37 6.5h8M35 8.5h12M38 10.5h6M37 12.5h8M34 14.5h14M36 16.5h10M38 18.5h6"/>
  <path d="M72 3.5h7M65 5.5h14M68 7.5h11M67 9.5h12M70 11.5h9M72 13.5h7M68 15.5h11M73 17.5h6"/>
  <path d="M96 4.5h14M96 6.5h14M96 8.5h14M96 10.5h14M96 12.5h14M96 14.5h14M96 16.5h14M96 18.5h14"/>
  <path d="M141 4.5h8M141 6.5h8M141 8.5h8M141 14.5h8M141 16.5h8M141 18.5h8"/>
  <path d="M172 4.5h8M172 6.5h8M172 8.5h8M172 14.5h8M172 16.5h8M172 18.5h8"/>
  <path d="M197 6.500h14M197 16.500h14M203 8.5h8M203 10.5h8M203 12.5h8M203 14.5h8"/>
  <path d="M228 6.500h14M228 16.500h14M234 8.5h8M234 10.5h8M234 12.5h8M234 14.5h8"/>
  <path d="M202.500 2v1M202.500 4v1M202.500 18v1M202.500 20v1M233.500 2v1M233.500 4v1M233.500 18v1M233.500 20v1"/>
 </g>
 <text x="134" y="10" font-family="Liberation Serif" font-size="10" fill="#444">1</text>
 <text x="134" y="20" font-family="Liberation Serif" font-size="10" fill="#444">2</text>
 <circle cx="167.500" cy="5.700" r="1.700"/><circle cx="167.500" cy="15.600" r="1.700"/>
 <path d="M196.500 11.500H202M199.500 8.500L196.500 11.500L199.500 14.500Z" fill="#000" stroke="#000" stroke-width="1.300"/>
 <path d="M227 11.500H232.500M229.500 8.500L232.500 11.500L229.500 14.500Z" fill="#000" stroke="#000" stroke-width="1.300"/>
</svg>
<div class="a sep" style="left:746px;top:97px;height:17px"></div>
<div class="a sep" style="left:878px;top:97px;height:17px"></div>
<!-- font color -->
<svg style="left:885px;top:93px" width="24" height="24" viewBox="0 0 24 24">
 <rect x="1.500" y="2" width="21" height="20" rx="3" fill="#fff" stroke="#f0a818" stroke-width="1.600"/>
 <text x="5" y="17" font-family="Liberation Serif" font-weight="bold" font-size="17" fill="#223a7a">A</text>
 <path d="M7.500 12H16" stroke="#3a9a4a" stroke-width="1.500"/>
 <rect x="1" y="16.500" width="21.500" height="5.500" fill="#800000"/>
 <ellipse cx="4" cy="5" rx="2" ry="3.200" transform="rotate(-20 4 5)" fill="#e02020"/><ellipse cx="9" cy="4" rx="2" ry="3.200" fill="#3060e0"/><ellipse cx="14" cy="4" rx="2" ry="3.200" transform="rotate(15 14 4)" fill="#20a030"/>
</svg>
<div class="a dd" style="left:915px;top:103px"></div>
<!-- highlight -->
<svg style="left:927px;top:93px" width="24" height="24" viewBox="0 0 24 24">
 <path d="M19 1 L22 2 L15 14 L12 13Z" fill="#f0a020"/>
 <path d="M5 7 L19 10 L20 15 L9 13Z" fill="#b8b8c0" stroke="#8a8a92" stroke-width=".6"/>
 <path d="M4 16 L12 9 L20 16 L12 22Z" fill="url(#gOr)"/>
 <rect x="2" y="16" width="20" height="6" fill="#ffff00"/>
 <ellipse cx="4" cy="4.500" rx="2" ry="3.200" transform="rotate(-20 4 4.500)" fill="#e02020"/><ellipse cx="9" cy="3.500" rx="2" ry="3.200" fill="#3060e0"/><ellipse cx="14" cy="4" rx="2" ry="3.200" transform="rotate(15 14 4)" fill="#20a030"/>
</svg>
<div class="a dd" style="left:957px;top:103px"></div>
<!-- background color -->
<svg style="left:969px;top:93px" width="24" height="24" viewBox="0 0 24 24">
 <path d="M3 1.500 L6 1 L10 13 L7 14Z" fill="#f0a020"/>
 <path d="M4 11 L17 7 L20 12 L8 15Z" fill="#b8b8c0" stroke="#8a8a92" stroke-width=".6"/>
 <path d="M4 16 L12 9 L20 16 L12 23Z" fill="url(#gOr)"/>
 <rect x="2" y="16.500" width="19.500" height="5" fill="#fff" stroke="#000" stroke-width="1.200"/>
 <ellipse cx="10" cy="5" rx="2" ry="3.200" transform="rotate(-15 10 5)" fill="#e02020"/><ellipse cx="15" cy="3.500" rx="2" ry="3.200" fill="#3060e0"/><ellipse cx="20" cy="4" rx="2" ry="3.200" transform="rotate(15 20 4)" fill="#20a030"/>
</svg>
<div class="a dd" style="left:999px;top:103px"></div>
<div class="a ovf" style="left:1015px;top:90px;height:31px"></div>
<!-- line under toolbars -->
<div class="a" style="left:1px;top:124px;width:1278px;height:1px;background:#8a8a8a"></div>
<div class="a" style="left:1px;top:125px;width:1278px;height:1px;background:#000"></div>
<div class="a" style="left:1px;top:125px;width:1px;height:797px;background:#000"></div>
<div class="a" style="left:2px;top:126px;width:1px;height:796px;background:#fff"></div>
<div class="a" style="left:0;top:125px;width:1px;height:798px;background:#b4b4b4"></div>
<div class="a" style="left:0;top:923px;width:1280px;height:1px;background:#fbfbfb"></div>
<!-- RULERS -->
<div class="a" style="left:5px;top:129px;width:20px;height:20px;border:1px solid #aaa;box-shadow:inset 1px 1px 0 #fff"></div>
<svg style="left:5px;top:129px" width="20" height="20"><path d="M8.500 7V12.500H14.500" fill="none" stroke="#000" stroke-width="2"/></svg>
<div class="a" style="left:76px;top:129px;width:934px;height:21px;background:#fff"></div>
<div class="a" style="left:76px;top:129px;width:111px;height:20px;background:#eee;border:1px solid #aaa;border-right:none"></div>
<div class="a" style="left:899px;top:129px;width:111px;height:20px;background:#eee;border:1px solid #aaa;border-left:none"></div>
<svg style="left:0;top:126px" width="1262" height="28" shape-rendering="crispEdges"><path d="M120.5 11v4M165.5 11v4M209.5 11v4M254.5 11v4M298.5 11v4M343.5 11v4M387.5 11v4M432.5 11v4M476.5 11v4M521.5 11v4M566.5 11v4M610.5 11v4M655.5 11v4M699.5 11v4M744.5 11v4M788.5 11v4M833.5 11v4M877.5 11v4M922.5 11v4M966.5 11v4M109.5 12v2M131.5 12v2M154.5 12v2M176.5 12v2M198.5 12v2M220.5 12v2M243.5 12v2M265.5 12v2M287.5 12v2M309.5 12v2M332.5 12v2M354.5 12v2M376.5 12v2M399.5 12v2M421.5 12v2M443.5 12v2M465.5 12v2M488.5 12v2M510.5 12v2M532.5 12v2M554.5 12v2M577.5 12v2M599.5 12v2M621.5 12v2M643.5 12v2M666.5 12v2M688.5 12v2M710.5 12v2M732.5 12v2M755.5 12v2M777.5 12v2M799.5 12v2M822.5 12v2M844.5 12v2M866.5 12v2M888.5 12v2M911.5 12v2M933.5 12v2M955.5 12v2M977.5 12v2M1000.5 12v2M87.5 12v2" stroke="#000" stroke-width="1"/><path d="M243.5 20v3M241 23.5h6M299.5 20v3M297 23.5h6M355.5 20v3M353 23.5h6M411.5 20v3M409 23.5h6M468.5 20v3M466 23.5h6M524.5 20v3M522 23.5h6M580.5 20v3M578 23.5h6M636.5 20v3M634 23.5h6M692.5 20v3M690 23.5h6M748.5 20v3M746 23.5h6M804.5 20v3M802 23.5h6M860.5 20v3M858 23.5h6" stroke="#000" stroke-width="1"/><g shape-rendering="auto" font-family="Liberation Sans" font-size="14.500" text-anchor="middle"><text x="98.4" y="18.500">2</text><text x="143.0" y="18.500">1</text><text x="232.0" y="18.500">1</text><text x="276.6" y="18.500">2</text><text x="321.1" y="18.500">3</text><text x="365.6" y="18.500">4</text><text x="410.1" y="18.500">5</text><text x="454.7" y="18.500">6</text><text x="499.2" y="18.500">7</text><text x="543.7" y="18.500">8</text><text x="588.3" y="18.500">9</text><text x="632.8" y="18.500">10</text><text x="677.3" y="18.500">11</text><text x="721.9" y="18.500">12</text><text x="766.4" y="18.500">13</text><text x="810.9" y="18.500">14</text><text x="855.5" y="18.500">15</text><text x="900.0" y="18.500">16</text><text x="944.5" y="18.500">17</text><text x="989.0" y="18.500">18</text></g><g shape-rendering="auto" fill="#eee" stroke="#000" stroke-width="1.200" stroke-linejoin="round"><path d="M181.500 3.500H193.500V5.500L187.500 13.500L181.500 5.500Z"/><path d="M181.500 23.500H193.500V21.500L187.500 13.500L181.500 21.500Z"/><path d="M893.500 23.500H905.500V21L899.500 14.500L893.500 21Z"/></g></svg>
<div class="a" style="left:6px;top:388px;width:19px;height:494px;background:#fff"></div>
<div class="a" style="left:5px;top:387px;width:20px;height:56px;background:#eee;border:1px solid #aaa;border-radius:1px"></div>
<svg style="left:5px;top:155px" width="20" height="727" shape-rendering="crispEdges"><clipPath id="vrc"><rect x="0" y="0" width="20" height="727"/></clipPath><g clip-path="url(#vrc)"><path d="M8 265.5h4M8 310.5h4M8 354.5h4M8 399.5h4M8 443.5h4M8 488.5h4M8 532.5h4M8 577.5h4M8 621.5h4M8 666.5h4M8 711.5h4M9 254.5h2M9 276.5h2M9 299.5h2M9 321.5h2M9 343.5h2M9 365.5h2M9 388.5h2M9 410.5h2M9 432.5h2M9 454.5h2M9 477.5h2M9 499.5h2M9 521.5h2M9 544.5h2M9 566.5h2M9 588.5h2M9 610.5h2M9 633.5h2M9 655.5h2M9 677.5h2M9 699.5h2M9 722.5h2" stroke="#000" stroke-width="1"/><g shape-rendering="auto" font-family="Liberation Sans" font-size="14.500" text-anchor="middle"><text transform="translate(15.500,243.5) rotate(-90)">1</text><text transform="translate(15.500,332.5) rotate(-90)">1</text><text transform="translate(15.500,377.1) rotate(-90)">2</text><text transform="translate(15.500,421.6) rotate(-90)">3</text><text transform="translate(15.500,466.1) rotate(-90)">4</text><text transform="translate(15.500,510.6) rotate(-90)">5</text><text transform="translate(15.500,555.2) rotate(-90)">6</text><text transform="translate(15.500,599.7) rotate(-90)">7</text><text transform="translate(15.500,644.2) rotate(-90)">8</text><text transform="translate(15.500,688.8) rotate(-90)">9</text><text transform="translate(15.500,733.3) rotate(-90)">10</text></g></g></svg>
<!-- DOC AREA (coords inside are page-absolute minus (31,155)) -->
<div id="doc" class="a">
 <!-- page 1 -->
 <div class="a" style="left:44px;top:-3px;width:938px;height:216px;background:#000"></div>
 <div class="a" style="left:45px;top:-3px;width:934px;height:213px;background:#fff"></div>
 <!-- page 2 -->
 <div class="a" style="left:44px;top:232px;width:936px;height:530px;background:#000"></div>
 <div class="a" style="left:979px;top:234px;width:3px;height:530px;background:#000"></div>
 <div class="a" style="left:45px;top:233px;width:934px;height:530px;background:#fff"></div>
 <!-- footnote frames -->
 <div class="a fr" style="left:156px;top:-10px;width:712px;height:42px"></div>
 <div class="a fr" style="left:156px;top:31px;width:712px;height:36px"></div>
 <div class="a fr" style="left:156px;top:66px;width:712px;height:18px"></div>
 <div class="a fr" style="left:156px;top:83px;width:712px;height:37px"></div>
 <!-- footnote text -->
 <div id="f1" class="a ln fn" style="left:176px;top:-3px"><i style="letter-spacing:-.138px">Bundesministerium für Umwelt, Naturschutz und <span class="sp">Reaktorsicherheit</span></i>: „Erneuerbare Energien können 2020</div>
 <div id="f2" class="a ln fn" style="left:176px;top:15px">bereits zu 25 % der Stromversorgung beitragen“, http://<span class="sp">www.erneuerbare-energien.de</span>/<span class="sp">inhalt</span>/</div>
 <div id="f3" class="a ln fn" style="left:176px;top:32px"><i style="letter-spacing:-.138px">Bundesministerium für Umwelt, Naturschutz und <span class="sp">Reaktorsicherheit</span></i>: „Entwicklung der erneuerbaren Energien</div>
 <div id="f4" class="a ln fn" style="left:176px;top:50px">im Jahre 2006 in Deutschland“,&nbsp; http://<span class="sp">www.erneuerbare</span>-<span class="sp">energien.de</span>/<span class="sp">inhalt</span>/, S. 10</div>
 <div id="f5" class="a ln fn" style="left:176px;top:67px">Ebenda</div>
 <div id="f6" class="a ln fn" style="left:176px;top:84px"><i style="letter-spacing:-.138px">Bundesministerium für Wirtschaft und Technologie</i>: „Service (Erläuterungen und Einheiten)“,</div>
 <div id="f7" class="a ln fn" style="left:176px;top:102px">http://<span class="sp">www.bmwi.de</span>/</div>
 <div class="a ln" style="left:159px;top:-3px;font-size:8.300px;line-height:10px">112</div>
 <div class="a ln" style="left:159px;top:32px;font-size:8.300px;line-height:10px">113</div>
 <div class="a ln" style="left:159px;top:67px;font-size:8.300px;line-height:10px">114</div>
 <div class="a ln" style="left:159px;top:84px;font-size:8.300px;line-height:10px">115</div>
 <!-- header -->
 <div class="a fr" style="left:156px;top:288px;width:712px;height:21px"></div>
 <div class="a" style="left:503px;top:289px;width:18px;height:19px;background:#c0c0c0"></div>
 <div id="h1" class="a ln bd" style="left:504px;top:288px;font-size:18px">57</div>
 <!-- body -->
 <div class="a fr" style="left:156px;top:344px;width:712px;height:460px"></div>
 <div class="a" style="left:156px;top:490px;width:712px;height:1px;background:#c0c0c0"></div>
 <div class="a" style="left:156px;top:499px;width:712px;height:1px;background:#c0c0c0"></div>
 <div id="b1" class="a ln bd" style="left:158px;top:343px;word-spacing:4.600px">Energien herausgeben kann, wie fehlerhaft müssen dann die komplizierten Statistiken und</div>
 <div id="b2" class="a ln bd" style="left:158px;top:375px">Angaben der OPEC-Staaten und der Entwicklungsländer sein.</div>
 <div class="a" style="left:156px;top:407px;width:2px;height:19px;background:#000"></div>
</div>
<!-- V SCROLLBAR -->
<div class="a" style="left:1262px;top:126px;width:17px;height:780px;background:#f4f4f4;background-image:repeating-conic-gradient(#e6e6e6 0 25%,#fcfcfc 0 50%);background-size:2px 2px"></div>
<div class="a" style="left:1279px;top:126px;width:1px;height:796px;background:#fafafa"></div>
<div class="a sbtn" style="left:1262px;top:127px;width:16px;height:15px"></div>
<div class="a sbtn" style="left:1262px;top:539px;width:16px;height:21px"></div>
<div class="a sbtn" style="left:1262px;top:826px;width:16px;height:16px"></div>
<div class="a sbtn" style="left:1262px;top:842px;width:16px;height:16px"></div>
<div class="a sbtn" style="left:1262px;top:858px;width:16px;height:16px"></div>
<div class="a sbtn" style="left:1262px;top:874px;width:16px;height:16px"></div>
<div class="a sbtn" style="left:1262px;top:890px;width:16px;height:16px"></div>
<svg style="left:1262px;top:126px" width="16" height="780" viewBox="0 0 16 780">
 <path d="M4 10L8 5.500L12 10Z"/>
 <path d="M4 710L8 705.500L12 710Z"/>
 <path d="M4 722L8 726.500L12 722Z"/>
 <path d="M5.500 738L8 735L10.500 738ZM5 743.500L8 740L11 743.500Z"/>
 <path d="M5 767.500L8 771L11 767.500ZM5.500 773L8 776L10.500 773Z"/>
 <path d="M5 760V755.500Q5 752.500 8 752.500Q11.500 752.500 11.500 756V760Z" fill="#5a5ae8" stroke="#4040c0" stroke-width=".6"/>
 <circle cx="7.300" cy="755.800" r="1.300" fill="#d0d0ff"/>
 <g fill="#b0b0b0"><rect x="3" y="418" width="1" height="1"/><rect x="7" y="418" width="1" height="1"/><rect x="11" y="418" width="1" height="1"/><rect x="3" y="422" width="1" height="1"/><rect x="7" y="422" width="1" height="1"/><rect x="11" y="422" width="1" height="1"/><rect x="3" y="426" width="1" height="1"/><rect x="7" y="426" width="1" height="1"/><rect x="11" y="426" width="1" height="1"/></g>
 <g fill="#fff"><rect x="4" y="419" width="1" height="1"/><rect x="8" y="419" width="1" height="1"/><rect x="12" y="419" width="1" height="1"/><rect x="4" y="423" width="1" height="1"/><rect x="8" y="423" width="1" height="1"/><rect x="12" y="423" width="1" height="1"/><rect x="4" y="427" width="1" height="1"/><rect x="8" y="427" width="1" height="1"/><rect x="12" y="427" width="1" height="1"/></g>
</svg>
<!-- H SCROLLBAR -->
<div class="a" style="left:3px;top:906px;width:1259px;height:16px;background:#f0f0f0"></div>
<div class="a sbtn" style="left:3px;top:906px;width:15px;height:16px;background:linear-gradient(#f6f6f6,#e4e4e4)"></div>
<div class="a sbtn" style="left:18px;top:906px;width:1212px;height:16px;background:linear-gradient(#f0f0f0,#e6e6e6);border-radius:2px"></div>
<div class="a sbtn" style="left:1231px;top:906px;width:15px;height:16px;background:linear-gradient(#f6f6f6,#e4e4e4)"></div>
<div class="a sbtn" style="left:1247px;top:906px;width:15px;height:16px;background:linear-gradient(#f6f6f6,#e4e4e4)"></div>
<svg style="left:0;top:906px" width="1262" height="16" viewBox="0 0 1262 16">
 <path d="M11.500 4.500L7 8L11.500 11.500Z"/><path d="M1239.500 4.500L1235 8L1239.500 11.500Z"/><path d="M1252 4.500L1256.500 8L1252 11.500Z"/>
 <g fill="#b0b0b0"><path d="M614 3h1v1h-1zM618 3h1v1h-1zM622 3h1v1h-1zM626 3h1v1h-1zM630 3h1v1h-1zM614 7h1v1h-1zM618 7h1v1h-1zM622 7h1v1h-1zM626 7h1v1h-1zM630 7h1v1h-1zM614 11h1v1h-1zM618 11h1v1h-1zM622 11h1v1h-1zM626 11h1v1h-1zM630 11h1v1h-1z"/></g>
 <g fill="#fff"><path d="M615 4h1v1h-1zM619 4h1v1h-1zM623 4h1v1h-1zM627 4h1v1h-1zM631 4h1v1h-1zM615 8h1v1h-1zM619 8h1v1h-1zM623 8h1v1h-1zM627 8h1v1h-1zM631 8h1v1h-1zM615 12h1v1h-1zM619 12h1v1h-1zM623 12h1v1h-1zM627 12h1v1h-1zM631 12h1v1h-1z"/></g>
</svg>
<!-- DRAW TOOLBAR -->
<div class="a grip" style="left:2px;top:928px;height:29px"></div>
<svg style="left:0;top:924px" width="670" height="36" viewBox="0 0 670 36">
 <defs><linearGradient id="gD" x1="0" y1="0" x2="1" y2="1"><stop offset="0" stop-color="#7cc0ff"/><stop offset="1" stop-color="#1464e0"/></linearGradient></defs>
 <!-- select -->
 <path d="M22 8 L22 23 L25.500 20 L28.500 27.500 L31.500 26 L28.500 19 L33 18.500Z" fill="#e8e8ee" stroke="#222" stroke-width="1.300" stroke-linejoin="round"/>
 <path d="M46.500 10.500V26.500" stroke="#c6c6c6"/>
 <!-- line -->
 <path d="M55.500 28.500L77 7.500" stroke="#111" stroke-width="1.500"/>
 <!-- rect -->
 <path d="M87 11 L107 12 L107 26 L87 25Z" fill="url(#gD)" stroke="#0b46b8" stroke-width="1.400"/>
 <path d="M88 27H108V13" fill="none" stroke="#999" stroke-width="1" opacity=".6"/>
 <!-- ellipse -->
 <ellipse cx="127.500" cy="17.800" rx="10" ry="7" fill="url(#gD)" stroke="#0b46b8" stroke-width="1.400"/>
 <path d="M120 25 Q128 28 137 23" fill="none" stroke="#999" stroke-width="1" opacity=".6"/>
 <!-- freeform -->
 <path d="M153 27 C148 24 149 19 154 20 C158 21 156 27 160 24 C164 21 166 19 170 19" fill="none" stroke="#333" stroke-width="1"/>
 <path d="M158 28 C162 27 166 26 169 24" stroke="#bbb" stroke-width="2" fill="none"/>
 <path d="M160 6 L164 8 L157 24 L153.500 26 L153.500 22Z" fill="url(#gYl)" stroke="#d08000" stroke-width=".6"/>
 <path d="M153.500 22 L157 24 L153.500 26Z" fill="#f0d8b0" stroke="#8a5a20" stroke-width=".5"/>
 <!-- text -->
 <defs><linearGradient id="gTx" x1="0" y1="0" x2="0" y2="1"><stop offset="0" stop-color="#8a8a8a"/><stop offset="1" stop-color="#1a1a1a"/></linearGradient></defs><text x="178.500" y="28" font-family="Liberation Serif" font-weight="bold" font-size="26" textLength="23" lengthAdjust="spacingAndGlyphs" fill="url(#gTx)">AI</text>
 <!-- callout doc -->
 <path d="M221 8.500 C227.500 8.500 231.500 12 231.500 16 C231.500 20 227.500 23.500 223 23.500 L222 28 L218 23 C213.500 22 210.500 19.500 210.500 16 C210.500 12 215 8.500 221 8.500Z" fill="#cfe8ff" stroke="#7ab8f0" stroke-width="1.400"/>
 <path d="M217 11H223L225.500 13.500V21H217Z" fill="#fafafa" stroke="#d0d0d8" stroke-width=".6"/>
 <path d="M240.500 10.500V26.500" stroke="#c6c6c6"/>
 <!-- basic shapes -->
 <rect x="249.500" y="8.500" width="12" height="17" fill="url(#gD)" stroke="#0b46b8" stroke-width="1"/>
 <circle cx="262" cy="18" r="7.500" fill="url(#gD)" stroke="#0b46b8" stroke-width="1"/>
 <path d="M249.500 27.500L256 13L262.500 27.500Z" fill="url(#gD)" stroke="#0b46b8" stroke-width="1"/>
 <path d="M278 16h6l-3 3.300Z"/>
 <!-- smiley -->
 <circle cx="301" cy="18" r="10.500" fill="url(#gD)" stroke="#0b46b8" stroke-width="1.200"/>
 <circle cx="297.500" cy="14.500" r="1.300" fill="#0b3aa0"/><circle cx="304.500" cy="14.500" r="1.300" fill="#0b3aa0"/>
 <path d="M295 20.500 Q301 26 307 20.500" fill="none" stroke="#0b3aa0" stroke-width="1.300"/>
 <path d="M320 16h6l-3 3.300Z"/>
 <!-- block arrow -->
 <path d="M332.500 18 L340 11 V15 H346.500 V11 L354 18 L346.500 25 V21 H340 V25Z" fill="url(#gD)" stroke="#0b46b8" stroke-width="1.200" stroke-linejoin="round"/>
 <path d="M362 16h6l-3 3.300Z"/>
 <!-- flowchart -->
 <rect x="374.500" y="7.500" width="21" height="21" fill="url(#gD)" stroke="#0b46b8" stroke-width="1.300"/>
 <path d="M379.500 7.500V28.500M374.500 12.500H395.500" stroke="#0b46b8" stroke-width="1.200"/>
 <path d="M404 16h6l-3 3.300Z"/>
 <!-- callout -->
 <path d="M419 7.500 H435 Q437.500 7.500 437.500 10 V20 Q437.500 22.500 435 22.500 H427 L418 29 L421 22.500 H419 Q416.500 22.500 416.500 20 V10 Q416.500 7.500 419 7.500Z" fill="url(#gD)" stroke="#0b46b8" stroke-width="1.200" stroke-linejoin="round"/>
 <path d="M446 16h6l-3 3.300Z"/>
 <!-- star -->
 <path d="M469 8 L472 15.500 L480 16 L474 21 L476 28.500 L469 24.500 L462 28.500 L464 21 L458 16 L466 15.500Z" fill="url(#gD)" stroke="#0b46b8" stroke-width="1.100" stroke-linejoin="round"/>
 <path d="M488 16h6l-3 3.300Z"/>
 <path d="M500.500 10.500V26.500" stroke="#c6c6c6"/>
 <!-- points (disabled) -->
 <path d="M510 25 C512 17 518 10 529 7.500" fill="none" stroke="#666" stroke-width="1.200"/>
 <rect x="513" y="11" width="7" height="7" fill="url(#dithB)" opacity=".8"/>
 <path d="M518 14 L518 26 L521 23.500 L523.500 29 L526 28 L523.500 22.500 L527 22Z" fill="#c8c8c8" stroke="#555" stroke-width="1"/>
 <path d="M539.500 10.500V26.500" stroke="#c6c6c6"/>
 <!-- fontwork -->
 <rect x="548.500" y="10" width="21" height="17" rx="3" fill="#f6f6fb" stroke="#b4b4d8" stroke-width="1.500"/>
 <text x="552" y="25.500" font-family="Liberation Sans" font-weight="bold" font-size="18" fill="#8a8a8a" stroke="#555" stroke-width=".4">A</text>
 <!-- from file -->
 <circle cx="594.500" cy="16.500" r="5" fill="#f84018"/>
 <rect x="582.500" y="10" width="8.500" height="8.500" fill="#30b838" stroke="#0a4a0a" stroke-width="1.100"/>
 <circle cx="584.200" cy="22.500" r="4.800" fill="#4a98f4" stroke="#1a58c8" stroke-width=".8"/>
 <rect x="588.700" y="19.200" width="10.300" height="8.300" fill="#eef4ff" stroke="#0a30d0" stroke-width="1.400"/>
 <path d="M589.500 21.800H598.500M589.500 24.500H598.500" stroke="#3a80f0" stroke-width="1.300"/>
 <path d="M607.500 10.500V26.500" stroke="#c6c6c6"/>
 <!-- extrusion (disabled) -->
 <path d="M623 8H634L637 11V26H620V14Z" fill="#8e928e" stroke="#333" stroke-width=".8" stroke-dasharray="1.500 1"/>
 <path d="M623 8H634L637 11V26H620V14Z" fill="url(#dith)" opacity=".8"/>
 <circle cx="621.500" cy="23.500" r="3.500" fill="#b8c0a8" stroke="#666" stroke-width=".6"/>
 <path d="M621 28H638" stroke="#bbb" stroke-width="1.500"/>
</svg>
<div class="a ovf ovf2" style="left:651px;top:927px;height:32px"></div>
<!-- STATUS BAR -->
<div class="a sf" style="left:5px;width:306px;padding-left:5px">Seite 57 &nbsp; 55 / 90</div>
<div class="a sf" style="left:315px;width:276px;padding-left:5px">Standard</div>
<div class="a sf" style="left:595px;width:45px;padding-left:4px">100%</div>
<div class="a sf" style="left:644px;width:47px;padding-left:0">EINFG</div>
<div class="a sf" style="left:695px;width:40px;padding-left:4px">STD</div>
<div class="a sf" style="left:739px;width:32px;padding-left:0">HYP</div>
<div class="a sf" style="left:775px;width:18px;padding-left:5px">*</div>
<div class="a sf" style="left:798px;width:26px"></div>
<div class="a sf" style="left:828px;width:447px"></div>
<!-- TASKBAR -->
<div id="task" class="a" style="left:0;top:984px;width:1280px;height:40px;background:#b89a8e;overflow:hidden">
<svg style="left:0;top:0" width="1280" height="40" viewBox="0 0 1280 40">
 <defs>
  <filter id="marble" color-interpolation-filters="sRGB" x="0" y="0" width="100%" height="100%"><feTurbulence type="fractalNoise" baseFrequency="0.16 0.11" numOctaves="3" seed="7"/><feColorMatrix type="matrix" values="0 0 0 0 0.62  0 0 0 0 0.50  0 0 0 0 0.45  0.9 0.9 0 0 -0.55"/></filter>
  <filter id="marble2" color-interpolation-filters="sRGB" x="0" y="0" width="100%" height="100%"><feTurbulence type="fractalNoise" baseFrequency="0.13 0.09" numOctaves="3" seed="3"/><feColorMatrix type="matrix" values="0 0 0 0 0.79  0 0 0 0 0.67  0 0 0 0 0.63  0.9 0.9 0 0 -0.6"/></filter>
  <linearGradient id="gSuse" x1="0" y1="0" x2="0" y2="1"><stop offset="0" stop-color="#f4f4f4"/><stop offset=".5" stop-color="#e4e4e6"/><stop offset="1" stop-color="#c4c4ca"/></linearGradient>
  <linearGradient id="gGecko" x1="0" y1="0" x2="0" y2="1"><stop offset="0" stop-color="#66a428"/><stop offset=".45" stop-color="#8cc25c"/><stop offset="1" stop-color="#6aa630"/></linearGradient>
  <linearGradient id="gDk" x1="0" y1="0" x2="1" y2="1"><stop offset="0" stop-color="#222"/><stop offset="1" stop-color="#888"/></linearGradient>
  <linearGradient id="gRoof" x1="0" y1="0" x2="0" y2="1"><stop offset="0" stop-color="#ff8a30"/><stop offset="1" stop-color="#d84a00"/></linearGradient>
  <linearGradient id="fadeA" x1="0" y1="0" x2="1" y2="0"><stop offset="0" stop-color="#b89a8e" stop-opacity="0"/><stop offset="1" stop-color="#b89a8e"/></linearGradient>
 </defs>
 <rect width="1280" height="40" filter="url(#marble)" opacity=".35"/>
 <rect width="1280" height="40" filter="url(#marble2)" opacity=".3"/>
 <!-- suse button -->
 <path d="M0 0H93L77 40H0Z" fill="#6aa82c"/>
 <path d="M86 0H93L77 40H72Z" fill="#7ab840"/>
 <path d="M0 0H78Q81 0 80 4L69 40H0Z" fill="url(#gSuse)"/>
 <path d="M69.800 16 C69 11 65 8 60 7.500 L52.500 5 L53 7 C46 4.500 38 4 30 4.600 C21 5.500 12 11 6.500 18.500 C2 25 2 32 6 36 C10 39.500 18 39.500 22 35 C25 31 24.500 27 23 24.500 C25 25 26.500 27 27.500 30.500 L31.500 32.500 C31 28 33 25 38 24 C42 23.500 45 24 47.500 25.500 L48.500 30.500 L52 33.500 C51 30 50.500 27 51.500 24.500 C55 23.500 60 23 64 22.500 C68 22 70.500 19.500 69.800 16Z" fill="url(#gGecko)"/>
 <path d="M8.500 31 C7 24.500 13.500 20.500 18.500 23.500 C22.500 26 21.500 32.500 16.500 33.300 C12.500 34 10.500 30 12.500 27.800 C14.500 25.800 17.500 27.200 16.500 29.700" fill="none" stroke="#e6e6ea" stroke-width="2" stroke-linecap="round"/>
 <circle cx="62.800" cy="13.300" r="3.300" fill="none" stroke="#eef2ea" stroke-width="1"/>
 <circle cx="64" cy="13" r="1.100" fill="#fff"/>
 <path d="M55 16.300 C59 19.500 64 20 69.300 18.200" fill="none" stroke="#eef2ea" stroke-width="1"/>
 <!-- office icon -->
 <path d="M97 23 L114.400 11.600 L128 24 L112.500 33.500Z" fill="url(#gBlue2)" stroke="#2a6ae0" stroke-width=".7"/>
 <path d="M97 23 L112.500 33.500 L128 24 V26 L112.500 36 L97 25.500Z" fill="#1a54c4"/>
 <path d="M103.750 16.600 L118 14 L120.600 25.400 L110 27.900Z" fill="#f2f3f8" stroke="#c8cad4" stroke-width=".6"/>
 <path d="M119.500 4.500 L123 6.500 L116 20.500 L112.500 21.800 L113 18.200Z" fill="url(#gYl)" stroke="#d08000" stroke-width=".6"/>
 <path d="M113 18.200 L116 20.500 L112.500 21.800Z" fill="#e8c8a0" stroke="#7a4a18" stroke-width=".5"/>
 <!-- home -->
 <defs><linearGradient id="gWall" x1="0" y1="0" x2="1" y2="1"><stop offset="0" stop-color="#fff"/><stop offset="1" stop-color="#c8c8c8"/></linearGradient>
 <radialGradient id="gKq" cx=".45" cy=".8" r=".9"><stop offset="0" stop-color="#e8f8ff"/><stop offset=".35" stop-color="#78c0f8"/><stop offset=".7" stop-color="#1a60e0"/><stop offset="1" stop-color="#0a38b8"/></radialGradient></defs>
 <path d="M141.300 22 L152.800 12.500 L164.900 22 V34.500 H141.300Z" fill="url(#gWall)" stroke="#a0a0a0" stroke-width=".7"/>
 <rect x="149.900" y="26.200" width="5.700" height="8.300" fill="#f08a1c" stroke="#b86008" stroke-width=".6"/>
 <rect x="147.500" y="19" width="10" height="4.200" rx="1" fill="#5a4a3a" stroke="#b07840" stroke-width=".9"/>
 <path d="M152.600 4.300 L167 23.500 L164.500 24.500 L152.800 13.600Z" fill="#e84c08"/>
 <path d="M152.600 4.300 L139 23.500 L141.500 24.500 L152.800 13.600Z" fill="#ff8424"/>
 <path d="M152.600 4.300 L167 23.500 L164.500 24.500 L152.800 13.600 L141.500 24.500 L139 23.500Z" fill="none" stroke="#c03800" stroke-width=".6" stroke-linejoin="round"/>
 <path d="M151 7.500 L142 20.500" stroke="#ffc088" stroke-width="1.200" opacity=".8"/>
 <!-- konqueror -->
 <g fill="#f6f6fa" stroke="#a8a8b8" stroke-width=".6" stroke-linejoin="round"><path d="M180.200 4.800 L187.500 8.500 L184 13Z"/><path d="M177 16 L184 15.500 L184 21.500 L177 20.500Z"/><path d="M181.500 30.500 L184.500 24.500 L189 28.500Z"/><path d="M191 34.800 L191.500 29.500 L196.500 29.500 L196 34.800Z"/><path d="M207.500 32.500 L200.500 29.500 L204 24.500Z"/></g>
 <circle cx="193.700" cy="19.300" r="11.200" fill="#eeeef2" stroke="#b0b0bc" stroke-width=".6"/>
 <circle cx="193.700" cy="19.300" r="10.200" fill="url(#gKq)"/>
 <path d="M186 16 C188 13.500 190 15 191 17.500 C192 20 189.500 22.500 187.500 24 C186 22 185 19 186 16Z M194.500 14 C197 12.500 200 13 201.500 15 C201 17.500 199 17 198.500 19.500 L197 22 C196 20 195 18 193.500 17.500 C193 16 193.500 15 194.500 14Z" fill="#1248c8" opacity=".9"/>
 <ellipse cx="192" cy="12" rx="6" ry="2.800" fill="#fff" opacity=".35"/>
 <!-- pager -->
 <rect x="213" y="0" width="25" height="3" fill="#fff"/>
 <rect x="213" y="3" width="25" height="17" fill="#477cd4"/>
 <rect x="213" y="3" width="1" height="17" fill="#fff"/><rect x="237" y="4" width="1" height="16" fill="#2a3a5a"/>
 <g transform="translate(215.500,2.200) scale(1,.98)"><path d="M2 1H11.500L15.500 5V17H2Z" fill="#2c5664"/><path d="M2 1H11.500L15.500 5V8H2Z" fill="#7a9aa0" opacity=".7"/><path d="M1 5.500C4 3 7 3.500 10 2M1.500 8.500C4 6 7 6.500 9.500 5" stroke="#f4f8f8" stroke-width="1.400" fill="none"/><path d="M5.500 7H15.500V16.500H5.500Z" fill="#fdfefe"/><path d="M7 8.800H14M7 11.800H12.500M7 14.800H14" stroke="#3a6a8c" stroke-width="1.100"/></g>
 <rect x="213" y="21" width="25" height="19" fill="#c8c8c8"/>
 <path d="M221.500 7.800 L225.800 3.500 V15" fill="none" stroke="#000" stroke-width="1.500"/>
 <text x="225.300" y="35.700" font-family="Liberation Sans" font-size="16.500" text-anchor="middle" fill="#000">2</text>
 <!-- media controls -->
 <g fill="url(#gDk)"><path d="M244 14h2v12.500h-2zM246 20.200L253 14V26.500Z"/><path d="M265 11.500L273 20L265 28.500Z"/><rect x="283" y="15" width="10" height="10.500"/><path d="M303 14L310 20.200L303 26.500ZM310 14h2v12.500h-2z"/></g>
 <rect x="318.500" y="18.500" width="80" height="3" fill="none" stroke="#b4b4b4" stroke-width="1"/>
 <path d="M353.500 14 Q353.500 13 354.500 13 H362.500 Q363.500 13 363.500 14 V22.500 L358.500 27.500 L353.500 22.500Z" fill="#f6f6f6" stroke="#9a9a9a" stroke-width="1"/>
 <path d="M356 16h1v1h-1zM360 16h1v1h-1z" fill="#b0b0b0"/>
</svg>
<!-- task entries -->
<svg style="left:404px;top:0" width="600" height="40" viewBox="0 0 600 40">
 <defs><radialGradient id="gAm" cx=".4" cy=".3" r=".8"><stop offset="0" stop-color="#9ab8e8"/><stop offset="1" stop-color="#2a4a90"/></radialGradient></defs>
 <!-- amarok -->
 <defs><linearGradient id="gAmBg" x1="0" y1="0" x2="1" y2="1"><stop offset="0" stop-color="#fff"/><stop offset="1" stop-color="#b0bcd0"/></linearGradient><clipPath id="amc"><circle cx="9.900" cy="9.700" r="7.300"/></clipPath></defs>
 <circle cx="9.900" cy="9.700" r="7.500" fill="url(#gAmBg)" stroke="#3a68a8" stroke-width="1.100"/>
 <g clip-path="url(#amc)"><path d="M1 12 L4 8.500 L6.500 9 L8.500 6.500 L10 7.500 L12.500 4 L13.500 5.500 L15.500 4.500 L14.800 7 L16 7.500 L14 9.500 C13 12 11.500 14 10.500 18 H1Z" fill="#2c5c9c"/>
 <path d="M3 16 C6 18.500 10 18.500 12 16 L11 19 H3Z" fill="#5ab4ea"/><circle cx="8.500" cy="9.500" r=".8" fill="#e8f0ff"/></g>
 <!-- media -->
 <defs><linearGradient id="gMon" x1="0" y1="0" x2="0" y2="1"><stop offset="0" stop-color="#5a9af8"/><stop offset="1" stop-color="#0a48d8"/></linearGradient></defs>
 <rect x="12.500" y="23.500" width="5" height="12.500" fill="#ececf0" stroke="#a4a4b0" stroke-width=".6"/>
 <path d="M13.500 29.500h3M13.500 31.500h3" stroke="#b4b4c0" stroke-width=".6"/>
 <rect x="2.700" y="25.700" width="10.500" height="7.500" fill="url(#gMon)" stroke="#eef2fa" stroke-width=".9"/>
 <path d="M4.500 34H11.500L12 36H4Z" fill="#f0f0f4"/>
 <!-- oo icons -->
 <g id="ooi" transform="translate(195.500,1)"><path d="M2 1H11.500L15.500 5V17H2Z" fill="#2c5664"/><path d="M2 1H11.500L15.500 5V8H2Z" fill="#7a9aa0" opacity=".7"/><path d="M1 5.500C4 3 7 3.500 10 2M1.500 8.500C4 6 7 6.500 9.500 5" stroke="#f4f8f8" stroke-width="1.400" fill="none"/><path d="M5.500 7H15.500V16.500H5.500Z" fill="#fdfefe"/><path d="M7 8.800H14M7 11.800H12.500M7 14.800H14" stroke="#3a6a8c" stroke-width="1.100"/></g>
 <g transform="translate(195.500,21)"><path d="M2 1H11.500L15.500 5V17H2Z" fill="#2c5664"/><path d="M2 1H11.500L15.500 5V8H2Z" fill="#7a9aa0" opacity=".7"/><path d="M1 5.500C4 3 7 3.500 10 2M1.500 8.500C4 6 7 6.500 9.500 5" stroke="#f4f8f8" stroke-width="1.400" fill="none"/><path d="M5.500 7H15.500V16.500H5.500Z" fill="#fdfefe"/><path d="M7 8.800H14M7 11.800H12.500M7 14.800H14" stroke="#3a6a8c" stroke-width="1.100"/></g>
 <!-- firefox -->
 <defs><linearGradient id="gFx" x1="1" y1="0" x2="0" y2="1"><stop offset="0" stop-color="#ffe030"/><stop offset=".45" stop-color="#f89018"/><stop offset="1" stop-color="#d83018"/></linearGradient>
 <radialGradient id="gFxB" cx=".5" cy=".35" r=".7"><stop offset="0" stop-color="#58b8f8"/><stop offset="1" stop-color="#1858b8"/></radialGradient></defs>
 <circle cx="397.900" cy="9.800" r="7.800" fill="url(#gFx)"/>
 <circle cx="399" cy="8" r="5.400" fill="url(#gFxB)"/>
 <path d="M390.800 5.500 C391.500 4 393 3.500 394 4 C394.500 5 395.500 5.500 397 5.500 C396 6.500 396 7.500 396.800 8.500 C395.500 8.800 395 10 396 11 C397.500 12.500 400 12 401.500 10.500 C401.500 13.500 398.500 15.500 395.500 14.500 C392 13.500 390 9.500 390.800 5.500Z" fill="#f88c18"/>
 <path d="M391 5.500 C392 4.200 393.500 4 394.500 5 C393.500 5.500 393.500 6.500 394 7.500 C392.800 7 391.800 6.500 391 5.500Z" fill="#ffc038"/>
</svg>
<div class="a tk" style="left:426px;top:0;width:171px;line-height:19px"><span class="nx">Amarok - Frohes Fest von</span></div>
<div class="a tk" style="left:425px;top:20px;width:172px;line-height:19px"><span class="nx">media:/hdd1/Sicherung/Ei</span></div>
<div class="a tk" style="left:620px;top:0;width:172px;line-height:19px;font-weight:bold"><span class="nx" style="transform:scaleX(.967)">BLL (version 0.3).odt - Op</span></div>
<div class="a tk" style="left:619px;top:20px;width:172px;line-height:19px"><span class="nx" style="transform:scaleX(.925)">Unbenannt1 - OpenOffice.or</span></div>
<div class="a tk" style="left:813px;top:0;width:172px;line-height:19px"><span class="nx">Internetseite des Bundesm</span></div>
<!-- tray -->
<svg style="left:990px;top:0" width="290" height="40" viewBox="0 0 290 40">
 <rect x="2" y="4" width="9" height="18" fill="#006400"/><rect x="2" y="21.500" width="9" height="1" fill="#e8e800"/><rect x="2" y="22.500" width="9" height="15.500" fill="#0000ff"/><rect x="2" y="38" width="9" height="2" fill="#ff0000"/><rect x="11" y="38" width="9" height="2" fill="#20c8c8"/>
 <!-- speaker -->
 <defs><radialGradient id="gSpk" cx=".5" cy=".45" r=".6"><stop offset="0" stop-color="#fff"/><stop offset=".5" stop-color="#c8c8c8"/><stop offset="1" stop-color="#6a6a6a"/></radialGradient>
 <linearGradient id="gRx" x1="0" y1="0" x2="0" y2="1"><stop offset="0" stop-color="#f4b4b4"/><stop offset="1" stop-color="#e02828"/></linearGradient></defs>
 <path d="M24.700 16 L31 12 V27.500 L24.700 23.500Z" fill="#3a98d8" stroke="#1a70b0" stroke-width=".6"/>
 <ellipse cx="35.800" cy="19.800" rx="6" ry="10.600" fill="#4aa8e2" stroke="#1a78b8" stroke-width=".9"/>
 <ellipse cx="35.600" cy="19.600" rx="3.600" ry="8" fill="url(#gSpk)"/>
 <!-- dog -->
 <ellipse cx="60" cy="14" rx="6.200" ry="5" transform="rotate(-20 60 14)" fill="#e8d098" stroke="#8a6a38" stroke-width=".6"/>
 <ellipse cx="64.500" cy="16" rx="2.400" ry="4.600" transform="rotate(-25 64.500 16)" fill="#c09a58" stroke="#7a5a30" stroke-width=".5"/>
 <ellipse cx="52.500" cy="17" rx="3.300" ry="3" fill="#fdfdfd"/>
 <path d="M48 14.500 L51.500 13 L51 16.500Z" fill="#111"/>
 <circle cx="56.500" cy="12" r=".9" fill="#222"/>
 <path d="M50.500 22 L64 19.500 L62.500 24 L53.500 30.500 L51 28Z" fill="#e81414"/>
 <path d="M55 23.500l1.500 4M58 22.800l-2.300 2.700l3 1.500" stroke="#fff" stroke-width=".9" fill="none"/>
 <!-- red x -->
 <rect x="71.600" y="9.500" width="19" height="19" rx="2.500" fill="#f8f8f8" stroke="#d0d4d4" stroke-width="1"/>
 <rect x="74" y="12" width="14.200" height="13.500" rx="1" fill="url(#gRx)"/>
 <path d="M78.200 16.200l5.600 5.600M83.800 16.200l-5.600 5.600" stroke="#fff" stroke-width="2.200"/>
 <!-- blue plug/lock -->
 <path d="M99 15.500 C99 10.500 108 10.500 108 15.500" fill="none" stroke="#8a949a" stroke-width="1.800"/>
 <path d="M98 21 C98 15.500 111 15.500 111 21 L111.500 27 H97.500Z" fill="#3048c0" stroke="#1a2a80" stroke-width=".6"/>
 <path d="M100 19.500 C103 17.500 106 17.500 109 19.500" stroke="#8aa0f0" stroke-width="1.400" fill="none"/>
 <path d="M100.500 25.500v4.500M107.500 25.500v5" stroke="#d8c020" stroke-width="1.600"/>
 <path d="M101.800 25.500v4M106.200 25.500v4" stroke="#40a040" stroke-width=".8"/>
 <!-- klipper -->
 <rect x="120.500" y="11.500" width="16" height="18.500" rx="1.500" fill="#f4c020" stroke="#d89000" stroke-width="1"/>
 <rect x="123" y="14" width="11" height="14.500" fill="#f8f8f8"/>
 <path d="M125 12.500 C125 8.500 132 8.500 132 12.500 L133 14.500H124Z" fill="#e0e0e4" stroke="#8a8a92" stroke-width=".7"/>
 <text x="125" y="27" font-family="Liberation Sans" font-size="12" fill="#666">k</text>
 <!-- plug -->
 <g transform="translate(-2,0)">
 <path d="M144 30 L150 24.500" stroke="#333" stroke-width="2.400" stroke-linecap="round"/>
 <path d="M144 30 L150 24.500" stroke="#f4f4f4" stroke-width="1.200" stroke-linecap="round"/>
 <path d="M148 22 L153 17.500 L158 21.500 L153.500 27.500Z" fill="#e8e8e8" stroke="#555" stroke-width=".8" stroke-linejoin="round"/>
 <path d="M155 17.500 L158.500 14M158 20.500 L161.500 17" stroke="#e0d020" stroke-width="1.800" stroke-linecap="round"/>
 </g>
 <!-- calendar + bell -->
 <defs><linearGradient id="gBell" x1="0" y1="0" x2="1" y2="1"><stop offset="0" stop-color="#ffe070"/><stop offset=".5" stop-color="#f8a800"/><stop offset="1" stop-color="#d07800"/></linearGradient></defs>
 <rect x="166.500" y="9.500" width="21" height="17" fill="#f6f8fc" stroke="#2a62d0" stroke-width="1"/>
 <rect x="166.500" y="9.500" width="21" height="2.800" fill="#3a7ae4"/>
 <path d="M171 12.500V26M175.500 12.500V26M180 12.500V26M184 12.500V26M167 16H187M167 19.500H187M167 23H187" stroke="#b8c4dc" stroke-width=".8"/>
 <path d="M180.500 14.500 h2 v4.500 h-2z" fill="#a85818" stroke="#6a3808" stroke-width=".5"/>
 <path d="M181.500 18.500 C184 18.500 185.500 20.500 185.500 23.500 C185.500 26 186.500 27.500 187.500 28.500 H175.500 C176.500 27.500 177.500 26 177.500 23.500 C177.500 20.500 179 18.500 181.500 18.500Z" fill="url(#gBell)" stroke="#b86800" stroke-width=".6"/>
 <!-- kmix round -->
 <circle cx="200.500" cy="19.300" r="10.400" fill="#a4a8b4" fill-opacity=".8" stroke="#8a90a0" stroke-width=".7"/>
 <path d="M200.500 19 L210.800 18 A10.400 10.400 0 0 1 200.500 29.700Z" fill="#3a78e0"/>
 <path d="M196 20 L206 13 L208 17 L200 21Z" fill="#7a8498" opacity=".8"/>
 <path d="M191.700 21.500h3v8.500h-3zM196.500 21.500h3.500v8.500h-3.500z" fill="#f4f4f8" stroke="#333a48" stroke-width=".8"/>
 <!-- logout/lock -->
 <defs><linearGradient id="gLo" x1="0" y1="0" x2="0" y2="1"><stop offset="0" stop-color="#f05050"/><stop offset="1" stop-color="#c81818"/></linearGradient><linearGradient id="gLk" x1="0" y1="0" x2="0" y2="1"><stop offset="0" stop-color="#6aa8f0"/><stop offset="1" stop-color="#2a68d0"/></linearGradient></defs>
 <rect x="271.500" y="2.800" width="15.500" height="14.700" rx="1.800" fill="url(#gLo)" stroke="#a01010" stroke-width=".8"/>
 <circle cx="279.200" cy="10.200" r="4.400" fill="none" stroke="#fff" stroke-width="1.600"/><path d="M279.200 7.800v4.800" stroke="#fff" stroke-width="1.600"/>
 <rect x="271.500" y="22" width="15.500" height="15.500" rx="1.800" fill="url(#gLk)" stroke="#1a50b0" stroke-width=".8"/>
 <path d="M276 29.500 V28 C276 24.800 282.500 24.800 282.500 28 V29.500" fill="none" stroke="#fff" stroke-width="1.500"/>
 <rect x="274.800" y="29.500" width="9" height="5.800" fill="none" stroke="#fff" stroke-width="1.400"/><path d="M276 32.500h6.500" stroke="#fff" stroke-width="1"/>
</svg>
<div class="a" style="left:1211px;top:9px;font-size:17px;line-height:24px;color:#111;white-space:nowrap;transform:scaleX(.9);transform-origin:0 50%">19:41</div>
</div>
</div></body></html>
